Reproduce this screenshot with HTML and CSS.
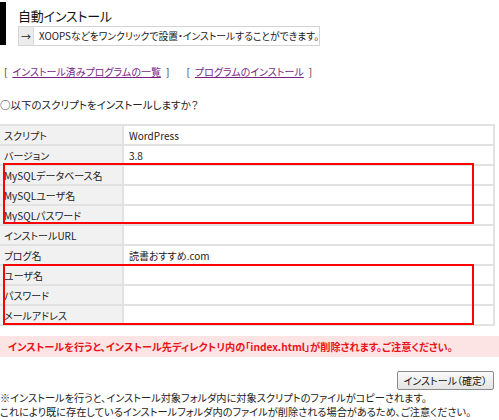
FILE: index.html
```html
<!DOCTYPE html>
<html lang="ja">
<head>
<meta charset="utf-8">
<link rel="stylesheet" href="styles.css">
</head>
<body>
<div class="page">
  <div class="header">
    <div class="bar"></div>
    <div class="head-main">
      <h1 class="title">自動インストール</h1>
      <div class="desc">
        <span class="arrow">→</span>
        <span class="desc-text">XOOPSなどをワンクリックで設置・インストールすることができます。</span>
      </div>
    </div>
  </div>

  <div class="links">
    <span class="br">[</span><a class="lnk" href="#">インストール済みプログラムの一覧</a><span class="br">]</span>
    <span class="br gap">[</span><a class="lnk" href="#">プログラムのインストール</a><span class="br">]</span>
  </div>

  <p class="question">○以下のスクリプトをインストールしますか？</p>

  <div class="table-wrap">
    <table class="info">
      <tr><th>スクリプト</th><td>WordPress</td></tr>
      <tr><th>バージョン</th><td>3.8</td></tr>
      <tr><th>MySQLデータベース名</th><td></td></tr>
      <tr><th>MySQLユーザ名</th><td></td></tr>
      <tr><th>MySQLパスワード</th><td></td></tr>
      <tr><th>インストールURL</th><td></td></tr>
      <tr><th>ブログ名</th><td>読書おすすめ.com</td></tr>
      <tr><th>ユーザ名</th><td></td></tr>
      <tr><th>パスワード</th><td></td></tr>
      <tr><th>メールアドレス</th><td></td></tr>
    </table>
    <div class="mark mark-a"></div>
    <div class="mark mark-b"></div>
  </div>

  <div class="warn">インストールを行うと、インストール先ディレクトリ内の「index.html」が削除されます。ご注意ください。</div>

  <div class="actions">
    <button class="btn" type="button">インストール（確定）</button>
  </div>

  <div class="notes">
    <p>※インストールを行うと、インストール対象フォルダ内に対象スクリプトのファイルがコピーされます。</p>
    <p>これにより既に存在しているインストールフォルダ内のファイルが削除される場合があるため、ご注意ください。</p>
  </div>
</div>
</body>
</html>
```

FILE: styles.css
```css
html, body {
  margin: 0;
  padding: 0;
  background: #fff;
}
body {
  font-family: "Noto Sans CJK JP", "Noto Sans", sans-serif;
  font-size: 11px;
  color: #222;
  font-feature-settings: "palt";
  width: 499px;
  height: 420px;
  overflow: hidden;
}
.page {
  width: 499px;
}
.header {
  display: flex;
  padding-top: 2px;
  height: 44px;
}
.bar {
  width: 6px;
  height: 43px;
  background: #000;
  flex: none;
}
.head-main {
  margin-left: 12px;
  display: flex;
  flex-direction: column;
}
.title {
  margin: 0;
  font-size: 13px;
  font-weight: normal;
  line-height: 16px;
  height: 24px;
  padding-top: 6px;
  box-sizing: border-box;
  color: #111;
  letter-spacing: -0.2px;
}
.desc {
  display: flex;
  align-items: stretch;
  width: 302px;
  height: 20px;
  border: 1px solid #d4d4d4;
  box-sizing: border-box;
  background: #fff;
}
.arrow {
  width: 18px;
  background: #ececec;
  border-right: 1px solid #d8d8d8;
  display: flex;
  align-items: center;
  justify-content: center;
  font-size: 10px;
}
.desc-text {
  display: flex;
  align-items: center;
  padding-left: 5px;
  font-size: 9.8px;
  white-space: nowrap;
}
.links {
  margin-top: 18px;
  padding-left: 4px;
  height: 16px;
  line-height: 16px;
  white-space: nowrap;
  font-size: 10px;
}
.br {
  color: #333;
  margin: 0 5px;
}
.br:first-child {
  margin-left: 0;
}
.br.gap {
  margin-left: 10px;
}
.lnk {
  color: #7a1f86;
  text-decoration: underline;
}
.question {
  margin: 18px 0 0 0;
  line-height: 14px;
  height: 14px;
  font-size: 10.5px;
}
.table-wrap {
  position: relative;
  margin-top: 12px;
  width: 495px;
}
.info {
  width: 495px;
  border-collapse: collapse;
  border-top: 2px solid #e2e2e2;
  border-right: 2px solid #e2e2e2;
  font-size: 10px;
}
.info th, .info td {
  height: 18px;
  padding: 0 4px;
  border-bottom: 2px solid #e2e2e2;
  text-align: left;
  font-weight: normal;
  white-space: nowrap;
}
.info th {
  width: 114px;
  background: #f1f1f1;
  border-right: 2px solid #e2e2e2;
  color: #222;
}
.info td {
  background: #fff;
  padding-left: 5px;
}
.mark {
  position: absolute;
  left: 3px;
  width: 471px;
  height: 61px;
  border: 2px solid #f00;
  box-sizing: border-box;
  pointer-events: none;
}
.mark-a {
  top: 39px;
}
.mark-b {
  top: 140px;
}
.warn {
  margin-top: 10px;
  height: 21px;
  line-height: 21px;
  background: #fde4e4;
  color: #e8141c;
  font-weight: bold;
  padding-left: 8px;
  white-space: nowrap;
  font-size: 10.2px;
}
.actions {
  display: flex;
  justify-content: flex-end;
  padding-right: 5px;
  margin-top: 14px;
}
.btn {
  font-family: inherit;
  font-size: 10px;
  font-feature-settings: "palt";
  height: 19px;
  padding: 0 6px;
  line-height: 16px;
  border: 1px solid #8a8a8a;
  border-radius: 2px;
  background: linear-gradient(#fafafa, #e4e4e4);
  color: #111;
}
.notes {
  margin-top: 1px;
  font-size: 10.2px;
}
.notes p {
  margin: 0;
  line-height: 14px;
  height: 14px;
  white-space: nowrap;
}
```
